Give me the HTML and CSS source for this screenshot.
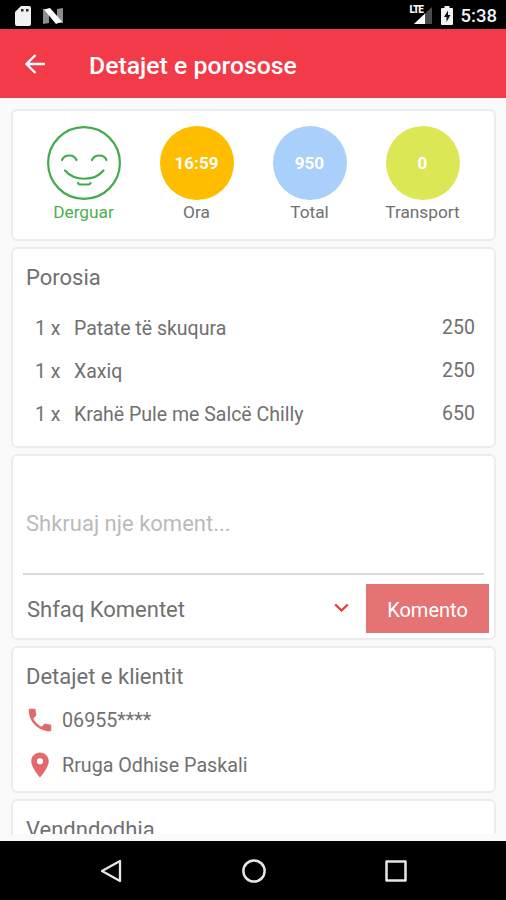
FILE: index.html
```html
<!DOCTYPE html>
<html lang="sq">
<head>
    <meta charset="UTF-8">
    <meta name="viewport" content="width=device-width, initial-scale=1.0">
    <title>Detajet e porosose</title>
    <link rel="stylesheet" href="styles.css">
</head>
<body>
    <div class="status-bar">
        <svg class="sd-icon" width="16" height="20" viewBox="0 0 16 20">
            <path d="M6 0h8a2 2 0 0 1 2 2v16a2 2 0 0 1-2 2H2a2 2 0 0 1-2-2V6z" fill="#f2f2f2"/>
            <path d="M6 3h2.500v2.500H6zM11 3h2.500v2.500H11z" fill="#222"/>
        </svg>
        <svg class="n-icon" width="20" height="16" viewBox="0 0 20 16">
            <path d="M0 1h6v14l-6 1zM14 1l6-1v15h-6z" fill="#8d8d8d"/>
            <path d="M1 1.500L7 0l12 13.500L13 16z" fill="#fff"/>
        </svg>
        <div class="status-right">
            <div class="signal">
                <svg width="18" height="17" viewBox="0 0 18 17">
                    <path d="M18 0v17H0z" fill="#4b4b4b"/>
                    <path d="M11 6.600V17H0z" fill="#fff"/>
                </svg>
                <span class="lte">LTE</span>
            </div>
            <svg class="battery" width="12" height="19" viewBox="0 0 12 19">
                <path d="M3.500 0h5v2H11a1 1 0 0 1 1 1v15a1 1 0 0 1-1 1H1a1 1 0 0 1-1-1V3a1 1 0 0 1 1-1h2.500z" fill="#f4f4f4"/>
                <path d="M7 4.500L3 11h2.500v5L9.500 9H7z" fill="#111"/>
            </svg>
            <span class="clock">5:38</span>
        </div>
    </div>

    <div class="header">
        <svg class="back" width="20" height="20" viewBox="0 0 20 20">
            <path d="M20 10H2M10.500 1L1.500 10l9 9" fill="none" stroke="#fff" stroke-width="2.300"/>
        </svg>
        <h1>Detajet e porosose</h1>
    </div>

    <div class="content">
        <div class="card summary">
            <div class="stat sent">
                <svg width="74" height="74" viewBox="0 0 74 74" fill="none" stroke="#43ab4e" stroke-width="2.200" stroke-linecap="round">
                    <circle cx="37" cy="37" r="35.900"/>
                    <path d="M15 34c2.500-6 12-6 14.500 0M45 34c2.500-6 12-6 14.500 0"/>
                    <path d="M18 44.500c9.500 11 29.500 11 38.500 0M31 57q.5 1.500 2 1.500h8.500q1.500 0 2-1.500"/>
                </svg>
                <span class="label">Derguar</span>
            </div>
            <div class="stat">
                <div class="circle orange">16:59</div>
                <span class="label">Ora</span>
            </div>
            <div class="stat">
                <div class="circle blue">950</div>
                <span class="label">Total</span>
            </div>
            <div class="stat">
                <div class="circle lime">0</div>
                <span class="label">Transport</span>
            </div>
        </div>

        <div class="card order">
            <h2>Porosia</h2>
            <ul class="items">
                <li><span class="qty">1 x</span><span class="name">Patate të skuqura</span><span class="price">250</span></li>
                <li><span class="qty">1 x</span><span class="name">Xaxiq</span><span class="price">250</span></li>
                <li><span class="qty">1 x</span><span class="name">Krahë Pule me Salcë Chilly</span><span class="price">650</span></li>
            </ul>
        </div>

        <div class="card comments">
            <div class="comment-input">Shkruaj nje koment...</div>
            <div class="comment-row">
                <span class="show-comments">Shfaq Komentet</span>
                <svg class="chevron" width="15" height="10" viewBox="0 0 15 10">
                    <path d="M1.200 1.500l6.300 6 6.300-6" fill="none" stroke="#e23b3b" stroke-width="2.300"/>
                </svg>
                <button class="button">Komento</button>
            </div>
        </div>

        <div class="card client">
            <h2>Detajet e klientit</h2>
            <div class="client-rows">
                <div class="client-row">
                    <svg width="30" height="30" viewBox="0 0 24 24">
                        <path d="M6.620 10.790c1.440 2.830 3.760 5.140 6.590 6.590l2.200-2.200c.27-.27.67-.36 1.020-.24 1.120.37 2.330.57 3.570.57.550 0 1 .45 1 1V20c0 .55-.45 1-1 1-9.390 0-17-7.610-17-17 0-.55.45-1 1-1h3.500c.55 0 1 .45 1 1 0 1.250.2 2.450.57 3.570.110.350.030.740-.250 1.020l-2.200 2.200z" fill="#e26a6d"/>
                    </svg>
                    <span class="phone">06955****</span>
                </div>
                <div class="client-row">
                    <svg width="30" height="30" viewBox="0 0 24 24">
                        <path d="M12 2C8.130 2 5 5.130 5 9c0 5.250 7 13 7 13s7-7.750 7-13c0-3.870-3.130-7-7-7zm0 9.500a2.500 2.500 0 1 1 0-5 2.500 2.500 0 0 1 0 5z" fill="#e26a6d"/>
                    </svg>
                    <span class="address">Rruga Odhise Paskali</span>
                </div>
            </div>
        </div>

        <div class="card location">
            <h2>Vendndodhja</h2>
        </div>
    </div>

    <div class="nav-bar">
        <svg width="22" height="24" viewBox="0 0 22 24" fill="none" stroke="#e6e6e6" stroke-width="2.300" stroke-linejoin="round">
            <path d="M20 2v20L2 12z"/>
        </svg>
        <svg width="24" height="24" viewBox="0 0 24 24" fill="none" stroke="#e6e6e6" stroke-width="2.500">
            <circle cx="12" cy="12" r="10.600"/>
        </svg>
        <svg width="22" height="22" viewBox="0 0 22 22" fill="none" stroke="#e6e6e6" stroke-width="2.500" stroke-linejoin="round">
            <path d="M1.500 1.500h19v19h-19z"/>
        </svg>
    </div>
</body>
</html>
```

FILE: styles.css
```css
* {
    box-sizing: border-box;
}
body {
    font-family: Roboto, sans-serif;
    color: #707070;
    background-color: #000;
    height: 900px;
    margin: 0;
    display: flex;
    flex-direction: column;
    overflow: hidden;
}
svg {
    display: block;
    flex: none;
}
.status-bar {
    height: 29px;
    flex: none;
    display: flex;
    align-items: center;
    padding: 2px 9px 0 15px;
    background-color: #000;
    color: #f4f4f4;
}
.n-icon {
    margin-left: 12px;
}
.status-right {
    display: flex;
    align-items: center;
    margin-left: auto;
}
.signal {
    position: relative;
    margin-right: 9px;
}
.lte {
    position: absolute;
    left: -5px;
    top: -1px;
    padding: 0 1px 1px;
    font-size: 10px;
    line-height: 8px;
    font-weight: 900;
    letter-spacing: -1px;
    background-color: #000;
}
.clock {
    margin-left: 8px;
    font-size: 18.5px;
    font-weight: 500;
    line-height: 20px;
}
.header {
    height: 69px;
    flex: none;
    display: flex;
    align-items: center;
    padding: 3px 25px 0;
    background-color: #f33a48;
    color: #fff;
}
.back {
    margin-top: -3px;
}
.header h1 {
    margin: 0 0 0 44px;
    font-size: 24.8px;
    font-weight: 500;
}
.content {
    height: 743px;
    flex: none;
    display: flex;
    flex-direction: column;
    gap: 6px;
    padding: 11px 10px 0 11px;
    background-color: #fafafa;
    border-bottom: 7px solid #fafafa;
    overflow: hidden;
}
.card {
    flex: none;
    background-color: #fff;
    border: 2px solid #ececec;
    border-radius: 6px;
}
.card h2 {
    margin: 0;
    padding-left: 13px;
    font-size: 22px;
    line-height: 26px;
    font-weight: normal;
}
.summary {
    height: 132px;
    display: grid;
    grid-template-columns: repeat(4, 113px);
    padding: 15px 0 0 14px;
}
.stat {
    display: flex;
    flex-direction: column;
    align-items: center;
}
.circle {
    width: 74px;
    height: 74px;
    border-radius: 50%;
    display: flex;
    align-items: center;
    justify-content: center;
    color: #fff;
    font-size: 17px;
    font-weight: bold;
}
.orange {
    background-color: #ffbd00;
}
.blue {
    background-color: #a9d0fb;
}
.lime {
    background-color: #dce755;
}
.label {
    margin-top: 2px;
    font-size: 17.3px;
    line-height: 21px;
}
.sent .label {
    color: #4caf50;
}
.order {
    height: 201px;
    padding-top: 16px;
}
.items {
    list-style: none;
    margin: 16px 0 0;
    padding: 0 19px 0 22px;
}
.items li {
    display: flex;
    align-items: center;
    height: 43px;
    font-size: 19.5px;
}
.qty {
    width: 39px;
}
.price {
    margin-left: auto;
    margin-top: -2px;
}
.comments {
    height: 186px;
    padding: 0 5px 0 10px;
}
.comment-input {
    height: 119px;
    margin-right: 5px;
    padding: 54px 0 0 3px;
    border-bottom: 2px solid #dadada;
    font-size: 22px;
    line-height: 27px;
    color: #bababa;
}
.comment-row {
    display: flex;
    align-items: center;
    margin-top: 9px;
    padding-left: 4px;
}
.show-comments {
    margin-top: 2px;
    font-size: 22px;
}
.chevron {
    margin: -1px 17px 0 auto;
}
.button {
    width: 123px;
    height: 49px;
    padding: 2px 0 0;
    background-color: #e57373;
    border: none;
    color: #fff;
    font-family: inherit;
    font-size: 20px;
}
.client {
    height: 147px;
    padding-top: 16px;
}
.client-rows {
    margin-top: 7px;
}
.client-row {
    display: flex;
    align-items: center;
    gap: 7px;
    height: 45px;
    padding-left: 12px;
    font-size: 19.7px;
}
.client-row span {
    margin-top: 2px;
}
.location {
    height: 147px;
    padding-top: 16px;
}
.nav-bar {
    height: 59px;
    flex: none;
    display: flex;
    align-items: center;
    justify-content: space-between;
    padding: 0 99px 0 100px;
    background-color: #000;
}
```
